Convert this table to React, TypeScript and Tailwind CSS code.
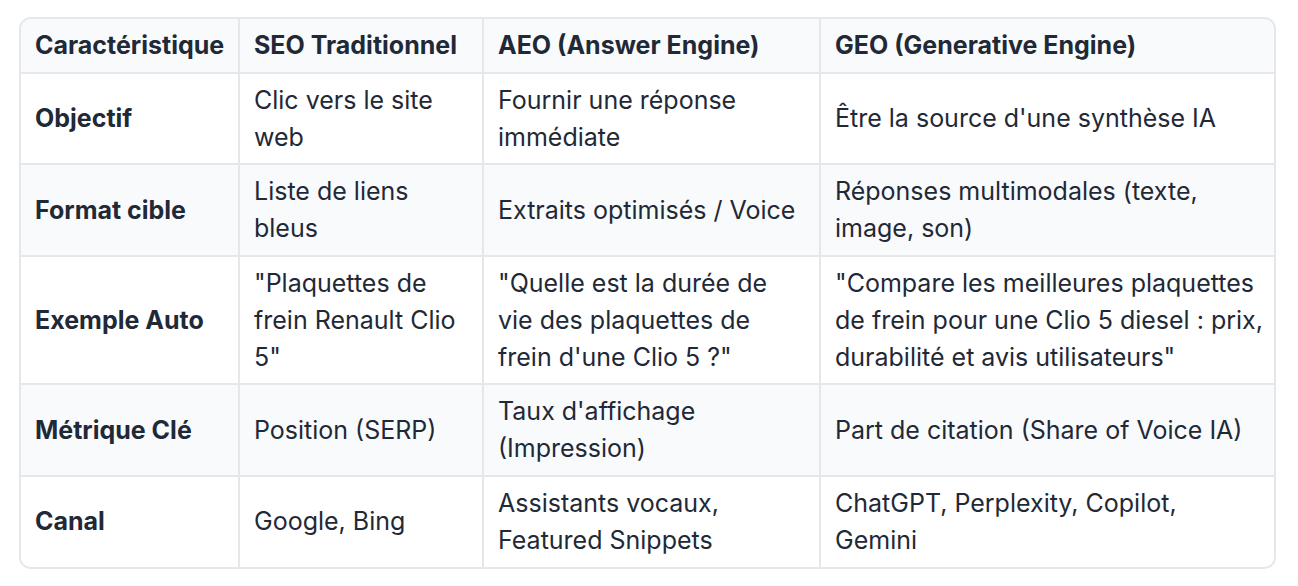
const HEAD = ["Caractéristique", "SEO Traditionnel", "AEO (Answer Engine)", "GEO (Generative Engine)"];

const ROWS = [
  ["Objectif", "Clic vers le site web", "Fournir une réponse immédiate", "Être la source d'une synthèse IA"],
  ["Format cible", "Liste de liens bleus", "Extraits optimisés / Voice", "Réponses multimodales (texte, image, son)"],
  [
    "Exemple Auto",
    "\"Plaquettes de frein Renault Clio 5\"",
    "\"Quelle est la durée de vie des plaquettes de frein d'une Clio 5 ?\"",
    "\"Compare les meilleures plaquettes de frein pour une Clio 5 diesel : prix, durabilité et avis utilisateurs\"",
  ],
  ["Métrique Clé", "Position (SERP)", "Taux d'affichage (Impression)", "Part de citation (Share of Voice IA)"],
  ["Canal", "Google, Bing", "Assistants vocaux, Featured Snippets", "ChatGPT, Perplexity, Copilot, Gemini"],
];

const WIDTHS = ["w-[218px]", "w-[244px]", "w-[337px]", "w-[454px]"];

export default function App() {
  return (
    <div className="min-h-screen bg-white pt-[17px] pl-[19px]" style={{ fontFamily: "Inter, 'Noto Sans', sans-serif" }}>
      <div className="w-[1257px] rounded-xl border-2 border-[#e5e7eb] overflow-hidden">
        <table className="w-full table-fixed border-collapse text-[25px] leading-[36.8px] text-[#1f2937]">
          <thead>
            <tr className="bg-[#f9fafb]">
              {HEAD.map((h, i) => (
                <th
                  key={h}
                  className={`${WIDTHS[i]} pl-[14px] ${i < 3 ? "pr-3 border-r-2" : "pr-[10px]"} py-2 text-left align-middle font-bold border-b-2 border-[#e5e7eb]`}
                >
                  {h}
                </th>
              ))}
            </tr>
          </thead>
          <tbody>
            {ROWS.map((row, r) => (
              <tr key={row[0]} className={r % 2 === 1 ? "bg-[#f9fafb]" : "bg-white"}>
                {row.map((c, i) => (
                  <td
                    key={i}
                    className={`pl-[14px] py-2 align-middle border-[#e5e7eb] ${r < ROWS.length - 1 ? "border-b-2" : ""} ${i < 3 ? "pr-3 border-r-2" : "pr-[10px]"} ${i === 0 ? "font-bold" : "font-normal"}`}
                  >
                    {c}
                  </td>
                ))}
              </tr>
            ))}
          </tbody>
        </table>
      </div>
    </div>
  );
}
